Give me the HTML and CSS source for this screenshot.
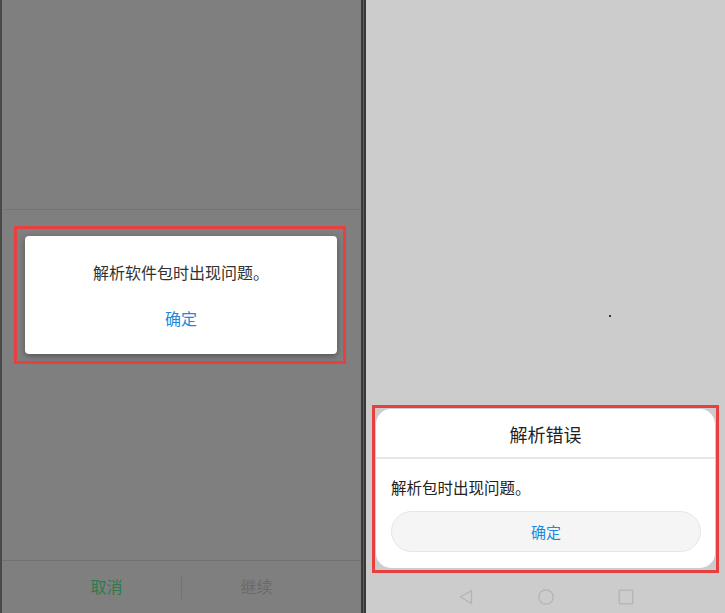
FILE: index.html
```html
<!DOCTYPE html>
<html lang="zh-CN">
<head>
    <meta charset="UTF-8">
    <meta name="viewport" content="width=device-width, initial-scale=1.0">
    <title>解析错误</title>
    <link rel="stylesheet" href="styles.css">
</head>
<body>
    <div class="screens">
        <!-- left phone: dimmed installer with dialog -->
        <div class="phone phone-left">
            <div class="left-top"></div>
            <div class="highlight highlight-left">
                <div class="dialog-old">
                    <div class="old-message">解析软件包时出现问题。</div>
                    <div class="old-ok">确定</div>
                </div>
            </div>
            <div class="spacer"></div>
            <div class="bottom-bar">
                <div class="bar-btn cancel">取消</div>
                <div class="bar-divider"></div>
                <div class="bar-btn next">继续</div>
            </div>
        </div>

        <div class="separator"></div>

        <!-- right phone: bottom sheet dialog -->
        <div class="phone phone-right">
            <span class="speck"></span>
            <div class="highlight highlight-right">
                <div class="dialog-new">
                    <div class="new-title">解析错误</div>
                    <div class="new-body">
                        <div class="new-message">解析包时出现问题。</div>
                        <div class="new-ok">确定</div>
                    </div>
                </div>
            </div>
            <div class="nav-bar">
                <svg class="nav-icon" width="16" height="16" viewBox="0 0 16 16">
                    <path d="M13.5 1.5 L2.5 8 L13.5 14.5 Z" fill="none" stroke="#b3b3b3" stroke-width="1.3" stroke-linejoin="round"/>
                </svg>
                <svg class="nav-icon" width="16" height="16" viewBox="0 0 16 16">
                    <circle cx="8" cy="8" r="7.2" fill="none" stroke="#b3b3b3" stroke-width="1.3"/>
                </svg>
                <svg class="nav-icon" width="16" height="16" viewBox="0 0 16 16">
                    <rect x="1.2" y="1.2" width="13.6" height="13.6" rx="1" fill="none" stroke="#b3b3b3" stroke-width="1.3"/>
                </svg>
            </div>
        </div>
    </div>
</body>
</html>
```

FILE: styles.css
```css
body {
    margin: 0;
    font-family: "Noto Sans CJK SC", "Noto Sans", sans-serif;
    background: #cccccc;
}

.screens {
    display: flex;
    width: 725px;
    height: 613px;
    overflow: hidden;
}

.phone {
    display: flex;
    flex-direction: column;
    height: 613px;
    box-sizing: border-box;
}

/* left side */

.phone-left {
    width: 361px;
    background: #7f7f7f;
    border-left: 2px solid #4a4a4a;
}

.left-top {
    height: 209px;
    margin-left: 2px;
    border-bottom: 1px solid #737373;
}

.highlight {
    border: 3px solid #e8403f;
    box-sizing: border-box;
}

.highlight-left {
    width: 332px;
    height: 138px;
    margin: 16px 0 0 12px;
    padding: 7px 6px 7px 8px;
}

.dialog-old {
    height: 118px;
    background: #ffffff;
    border-radius: 4px;
    box-shadow: 0 2px 6px rgba(0, 0, 0, 0.35);
    text-align: center;
    padding-top: 25px;
    box-sizing: border-box;
}

.old-message {
    font-size: 16px;
    line-height: 22px;
    color: #333333;
}

.old-ok {
    margin-top: 24px;
    font-size: 16px;
    line-height: 22px;
    color: #2288dd;
}

.spacer {
    flex: 1;
}

.bottom-bar {
    height: 52px;
    border-top: 1px solid #717171;
    display: flex;
    align-items: center;
    padding: 0 30px;
}

.bar-btn {
    flex: 1;
    text-align: center;
    font-size: 16px;
    line-height: 22px;
    padding-bottom: 2px;
}

.bar-btn.cancel {
    color: #2b7c4c;
}

.bar-btn.next {
    color: #6a6a6a;
}

.bar-divider {
    width: 1px;
    height: 24px;
    background: #727272;
}

.separator {
    width: 5px;
    height: 613px;
    background: linear-gradient(to right, #3a3a3a 0 2px, #5c5c5c 2px 3px, #3a3a3a 3px 5px);
}

/* right side */

.phone-right {
    flex: 1;
    position: relative;
    background: #cccccc;
    justify-content: flex-end;
}

.speck {
    position: absolute;
    left: 243px;
    top: 315px;
    width: 2px;
    height: 2px;
    background: #333344;
}

.highlight-right {
    margin: 0 6px 8px;
    padding: 1px 1px 2px;
}

.dialog-new {
    background: #ffffff;
    border-radius: 15px;
}

.new-title {
    padding: 13px 0 11px;
    font-size: 18px;
    line-height: 24px;
    color: #222222;
    text-align: center;
    border-bottom: 2px solid #e6e6e6;
}

.new-body {
    padding: 17px 14px 16px 15px;
}

.new-message {
    font-size: 15.5px;
    line-height: 22px;
    color: #222222;
}

.new-ok {
    margin-top: 13px;
    height: 41px;
    box-sizing: border-box;
    border: 1px solid #e6e6e6;
    border-radius: 21px;
    background: #f5f5f5;
    display: flex;
    align-items: center;
    justify-content: center;
    font-size: 15px;
    color: #2288dd;
}

.nav-bar {
    height: 32px;
    display: flex;
    align-items: center;
    justify-content: center;
    gap: 64px;
}

.nav-icon {
    display: block;
}
```
